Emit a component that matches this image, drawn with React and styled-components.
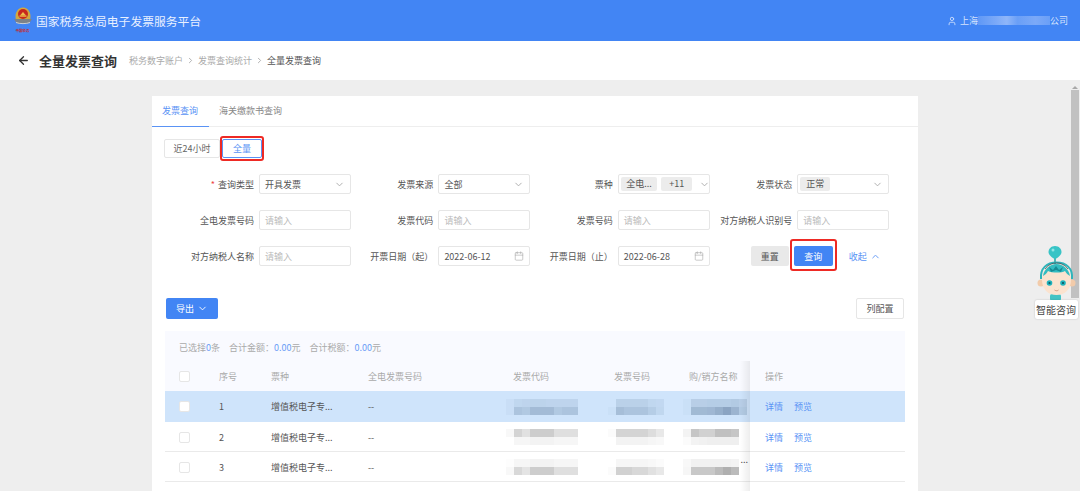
import React from "react";
import styled, { createGlobalStyle } from "styled-components";
import { ArrowLeft, Calendar, ChevronDown, ChevronRight, ChevronUp, User } from "lucide-react";

const Global = createGlobalStyle`
  html, body {
    margin: 0;
    height: 491px;
    overflow: hidden;
    background: #eeeeee;
    font-family: "Noto Sans CJK SC", "Noto Sans", sans-serif;
    font-size: 9px;
    color: #555;
  }
  * { box-sizing: border-box; }
`;

const Page = styled.div`
  position: relative;
  width: 1080px;
  height: 491px;
  overflow: hidden;
`;

// top bar
const TopBar = styled.header`
  height: 41px;
  background: #4285f4;
  display: flex;
  align-items: center;
  justify-content: space-between;
  padding: 0 12px 0 13px;
  color: #fff;
`;

const Brand = styled.div`
  display: flex;
  align-items: center;
  gap: 2px;
  font-size: 11.8px;
  color: #e8f0ff;
`;

const Account = styled.div`
  display: flex;
  align-items: center;
  font-size: 9px;
  color: #d5e3fd;
  svg { margin-right: 3px; }
`;

const AccountBlur = styled.span`
  width: 72px;
  height: 9px;
  background: linear-gradient(90deg, #5f98f6 0%, #7ba9f8 25%, #8fb6f9 40%, #6a9ff7 55%, #7ba9f8 80%, #6a9ff7 100%);
`;

const SubBar = styled.div`
  height: 39px;
  background: #fff;
  display: flex;
  align-items: center;
  padding-left: 17px;
  color: #333;
`;

const Title = styled.h1`
  margin: 0 12px 0 9px;
  font-size: 13px;
  font-weight: 700;
  color: #333;
`;

const Crumbs = styled.nav`
  display: flex;
  align-items: center;
  gap: 3px;
  color: #aaa;
  svg { color: #999; }
`;

const CrumbNow = styled.span`
  color: #555;
`;

// main card
const Card = styled.main`
  width: 766px;
  margin: 16px 0 0 152px;
  background: #fff;
  height: 420px;
`;

const Tabs = styled.div`
  display: flex;
  height: 31px;
  border-bottom: 1px solid #eee;
`;

const Tab = styled.div`
  padding: 0 ${({ $active }) => ($active ? "11px 0 10px" : "10px")};
  line-height: 30px;
  height: 31px;
  color: ${({ $active }) => ($active ? "#5a93f5" : "#888")};
  border-bottom: 1px solid ${({ $active }) => ($active ? "#5a93f5" : "transparent")};
`;

const Body = styled.div`
  padding: 12px 13px 0 12px;
`;

const Segments = styled.div`
  display: flex;
  height: 19px;
  gap: 2px;
`;

const Segment = styled.div`
  position: relative;
  width: ${({ $w }) => $w}px;
  display: flex;
  align-items: center;
  justify-content: center;
  border: 1px solid ${({ $active }) => ($active ? "#5a93f5" : "#e6e6e6")};
  border-radius: 2px;
  color: ${({ $active }) => ($active ? "#5a93f5" : "#666")};
`;

const Highlight = styled.span`
  position: absolute;
  top: ${({ $t }) => $t}px;
  bottom: ${({ $b }) => $b}px;
  left: ${({ $x }) => $x}px;
  right: ${({ $x }) => $x}px;
  border: 2px solid #ee2a24;
  border-radius: 3px;
  pointer-events: none;
`;

const FormGrid = styled.div`
  display: grid;
  grid-template-columns: repeat(4, 179.4px);
  grid-auto-rows: 20px;
  row-gap: 16px;
  margin: 16px 0 0 7.6px;
`;

const Field = styled.div`
  display: grid;
  grid-template-columns: 1fr 92px;
  column-gap: 5px;
  align-items: center;
`;

const Label = styled.label`
  text-align: right;
  white-space: nowrap;
  color: #555;
`;

const Req = styled.span`
  color: #ee4444;
  margin-right: 3px;
`;

const Input = styled.div`
  height: 20px;
  border: 1px solid #e6e6e6;
  border-radius: 2px;
  display: flex;
  align-items: center;
  padding: 0 5px;
  gap: 2px;
  color: ${({ $ph }) => ($ph ? "#bbb" : "#555")};
  svg { margin-left: auto; color: #aaa; flex: none; }
`;

const Chip = styled.span`
  background: #ececec;
  border-radius: 2px;
  height: 14px;
  line-height: 14px;
  padding: 0 ${({ $pad }) => $pad}px;
  margin-left: -3px;
  margin-right: 5px;
  white-space: nowrap;
`;

const Actions = styled.div`
  display: flex;
  align-items: center;
  padding-left: 41px;
  gap: 5px;
  white-space: nowrap;
`;

const Button = styled.button`
  position: relative;
  font: inherit;
  flex: none;
  height: ${({ $h }) => $h || 20}px;
  width: ${({ $w }) => $w}px;
  border-radius: 2px;
  padding: 0;
  display: flex;
  align-items: center;
  justify-content: center;
  gap: 3px;
  border: ${({ $kind }) => ($kind === "outline" ? "1px solid #e6e6e6" : "none")};
  background: ${({ $kind }) => ({ primary: "#4285f4", muted: "#e9e9e9", outline: "#fff" }[$kind])};
  color: ${({ $kind }) => ($kind === "primary" ? "#fff" : "#555")};
`;

const Collapse = styled.span`
  display: flex;
  align-items: center;
  gap: 3px;
  color: #5a93f5;
  margin-left: 11px;
`;

const Toolbar = styled.div`
  display: flex;
  justify-content: space-between;
  align-items: center;
  height: 22px;
  margin: 31px 1px 0 2px;
`;

// table
const Table = styled.div`
  position: relative;
  width: 740px;
  margin: 12px 0 0 1px;
  background: #fff;
`;

const Summary = styled.div`
  height: 31px;
  padding-top: 1px;
  display: flex;
  align-items: center;
  gap: 9px;
  padding-left: 14px;
  background: #f9faff;
  color: #aaa;
`;

const Num = styled.span`
  color: #6b9ef6;
`;

const columns = "54px 52px 97px 145px 101px 75px 76px 1fr";

const HeadRow = styled.div`
  display: grid;
  grid-template-columns: ${columns};
  height: 29px;
  align-items: center;
  background: #f9faff;
  color: #aaa;
`;

const Row = styled.div`
  display: grid;
  grid-template-columns: ${columns};
  height: ${({ $selected }) => ($selected ? 31 : 30)}px;
  padding-top: 1px;
  align-items: center;
  background: ${({ $selected }) => ($selected ? "#cfe4fb" : "#fff")};
  border-bottom: 1px solid ${({ $selected }) => ($selected ? "#cfe4fb" : "#eaeaea")};
  color: #555;
`;

const Check = styled.span`
  display: block;
  width: 11px;
  height: 11px;
  margin-left: 14px;
  background: #fff;
  border: 1px solid #e6e6e6;
  border-radius: 2px;
`;

const Link = styled.span`
  color: #5a93f5;
  margin-right: 11px;
`;

const Smudge = styled.div`
  display: grid;
  grid-template-columns: repeat(${({ $n }) => $n}, 8px);
  grid-auto-rows: 8px;
  width: max-content;
  margin-left: ${({ $shift }) => $shift}px;
  filter: blur(0.6px);
`;

const Tile = styled.i`
  display: block;
  background: ${({ $tint }) => ($tint ? "#5d7a9c" : "#8d8d8d")};
`;

const Dots = styled.span`
  position: absolute;
  right: 157px;
  top: 122px;
  color: #555;
`;

const FixedShade = styled.div`
  position: absolute;
  left: 575px;
  top: 30px;
  bottom: -200px;
  width: 10px;
  background: linear-gradient(90deg, rgba(0, 0, 0, 0), rgba(0, 0, 0, 0.07));
  pointer-events: none;
`;

// overlays
const ScrollArrow = styled.span`
  position: absolute;
  left: 1072px;
  top: 83px;
  width: 0;
  height: 0;
  border: 3px solid transparent;
  border-bottom: 3px solid #a8a8a8;
`;

const ScrollThumb = styled.div`
  position: absolute;
  left: 1071px;
  top: 90px;
  width: 8px;
  height: 208px;
  background: #c1c1c1;
`;

const Helper = styled.div`
  position: absolute;
  left: 1034px;
  top: 246px;
  width: 44px;
  display: flex;
  flex-direction: column;
  align-items: center;
`;

const HelperLabel = styled.div`
  width: 43px;
  height: 19px;
  margin-top: -1px;
  line-height: 19px;
  text-align: center;
  font-size: 10px;
  color: #444;
  background: #fff;
  border-radius: 2px;
  box-shadow: 0 0 2px rgba(0, 0, 0, 0.2);
  white-space: nowrap;
`;

const Emblem = () => (
  <svg width="21" height="28" viewBox="0 0 21 28">
    <path d="M3 13C1 6 5 .5 10 .5S19 6 17 13z" fill="#d2a83e" />
    <circle cx="10" cy="7" r="5" fill="#c8281e" />
    <path d="M7 8.500l3-3.500 3 3.500z" fill="#eec04c" />
    <rect x="6.500" y="8.500" width="7" height="1.200" fill="#eec04c" />
    <path d="M1 12h18l-2.500 4c-3 1.200-10 1.200-13 0z" fill="#7d8288" />
    <path d="M3 15.500c4 1.500 10 1.500 14 0" fill="none" stroke="#dfe3e8" strokeWidth="0.8" />
    <text x="9.500" y="24.500" fontSize="3.400" textAnchor="middle" fill="#c8281e" fontWeight="700">中国税务</text>
  </svg>
);

const Mascot = () => (
  <svg width="44" height="55" viewBox="0 0 44 55">
    <path d="M21 10v9" stroke="#2aa9a9" strokeWidth="1.600" />
    <path d="M21 0c4 0 6.500 3 6.500 6S24 12 21 13c-3-1-6.500-4-6.500-7S17 0 21 0z" fill="#38c4c6" />
    <circle cx="19" cy="4" r="1.500" fill="#8fe6e6" />
    <rect x="16" y="48" width="11" height="7" rx="2" fill="#44c3c4" />
    <circle cx="7" cy="37" r="3.500" fill="#f2cbaa" />
    <circle cx="38" cy="37" r="3.500" fill="#f2cbaa" />
    <path d="M8 33c0-9 6-15 14.500-15S37 24 37 33v1c0 9-6 15-14.500 15S8 43 8 34z" fill="#fbe3cf" />
    <path d="M9 30c1-7 7-12 13.500-12S35 23 36 30c-2-1-4-3-5-5-3 2-13 2-17 0-1 2-3 4-5 5z" fill="#33bcc1" />
    <path d="M15 21l4 3 3-4 3 4 4-3-2 5-5-2-5 2z" fill="#178b94" />
    <path d="M7 33C6 22 13 16.500 22.500 16.500S39 22 38 33" fill="none" stroke="#2fb4ba" strokeWidth="2" />
    <path d="M11 23c3-4 7-6 11.500-6S31 19 34 23" fill="none" stroke="#4a4f54" strokeWidth="0.800" />
    <circle cx="15.500" cy="37" r="2.800" fill="#1fb3bd" />
    <circle cx="29" cy="37" r="2.800" fill="#1fb3bd" />
    <circle cx="15.500" cy="37" r="1.100" fill="#0b5660" />
    <circle cx="29" cy="37" r="1.100" fill="#0b5660" />
    <path d="M20.500 44c1.500 1 3 1 4 0" fill="none" stroke="#c98a70" strokeWidth="0.800" />
  </svg>
);

// blurred-out cell, two lines of mosaic tiles
const Blur = ({ lines, shift, tint }) => (
  <Smudge $n={lines[0].length} $shift={shift}>
    {lines.flat().map((a, i) => (
      <Tile key={i} $tint={tint} style={{ opacity: a }} />
    ))}
  </Smudge>
);

const rows = [
  {
    no: 1,
    selected: true,
    code: [[0.05, 0.12, 0.14, 0.16, 0.16, 0.14, 0.14, 0.14, 0.14], [0.05, 0.3, 0.26, 0.38, 0.38, 0.38, 0.26, 0.3, 0.3]],
    num: [[0, 0.18, 0.18, 0.18, 0.18, 0.12, 0.1], [0.04, 0.36, 0.3, 0.3, 0.3, 0.22, 0.12]],
    name: [[0.04, 0.2, 0.2, 0.22, 0.22, 0.22, 0.25, 0.2], [0.04, 0.4, 0.4, 0.42, 0.5, 0.6, 0.45, 0.25]],
  },
  {
    no: 2,
    code: [[0.06, 0.38, 0.26, 0.44, 0.44, 0.44, 0.28, 0.28, 0.28], [0, 0.08, 0.08, 0.1, 0.1, 0.1, 0.08, 0.08, 0.08]],
    num: [[0.04, 0.38, 0.38, 0.38, 0.38, 0.3, 0.2], [0, 0.1, 0.1, 0.1, 0.1, 0.08, 0.06]],
    name: [[0.1, 0.5, 0.4, 0.4, 0.55, 0.55, 0.5, 0], [0.04, 0.1, 0.12, 0.14, 0.14, 0.14, 0.14, 0]],
  },
  {
    no: 3,
    code: [[0.02, 0.08, 0.08, 0.1, 0.1, 0.1, 0.08, 0.08, 0.08], [0.06, 0.34, 0.24, 0.44, 0.44, 0.44, 0.28, 0.28, 0.28]],
    num: [[0, 0.08, 0.08, 0.08, 0.08, 0.06, 0.04], [0.04, 0.4, 0.4, 0.34, 0.34, 0.26, 0.2]],
    name: [[0.06, 0.12, 0.12, 0.12, 0.12, 0.12, 0.1, 0], [0.08, 0.48, 0.48, 0.48, 0.6, 0.7, 0.6, 0]],
  },
];

const App = () => (
  <Page>
    <Global />
    <TopBar>
      <Brand>
        <Emblem />
        国家税务总局电子发票服务平台
      </Brand>
      <Account>
        <User size={10} strokeWidth={2} />
        上海
        <AccountBlur />
        公司
      </Account>
    </TopBar>
    <SubBar>
      <ArrowLeft size={13} strokeWidth={2.4} />
      <Title>全量发票查询</Title>
      <Crumbs>
        税务数字账户
        <ChevronRight size={9} />
        发票查询统计
        <ChevronRight size={9} />
        <CrumbNow>全量发票查询</CrumbNow>
      </Crumbs>
    </SubBar>

    <Card>
      <Tabs>
        <Tab $active>发票查询</Tab>
        <Tab>海关缴款书查询</Tab>
      </Tabs>
      <Body>
        <Segments>
          <Segment $w={56}>近24小时</Segment>
          <Segment $w={40} $active>
            全量
            <Highlight $t={-4} $b={-4} $x={-3} />
          </Segment>
        </Segments>

        <FormGrid>
          <Field>
            <Label><Req>*</Req>查询类型</Label>
            <Input>开具发票<ChevronDown size={11} /></Input>
          </Field>
          <Field>
            <Label>发票来源</Label>
            <Input>全部<ChevronDown size={11} /></Input>
          </Field>
          <Field>
            <Label>票种</Label>
            <Input><Chip $pad={5.5}>全电...</Chip><Chip $pad={8}>+11</Chip><ChevronDown size={11} /></Input>
          </Field>
          <Field>
            <Label>发票状态</Label>
            <Input><Chip $pad={6}>正常</Chip><ChevronDown size={11} /></Input>
          </Field>

          <Field>
            <Label>全电发票号码</Label>
            <Input $ph>请输入</Input>
          </Field>
          <Field>
            <Label>发票代码</Label>
            <Input $ph>请输入</Input>
          </Field>
          <Field>
            <Label>发票号码</Label>
            <Input $ph>请输入</Input>
          </Field>
          <Field>
            <Label>对方纳税人识别号</Label>
            <Input $ph>请输入</Input>
          </Field>

          <Field>
            <Label>对方纳税人名称</Label>
            <Input $ph>请输入</Input>
          </Field>
          <Field>
            <Label>开票日期（起）</Label>
            <Input>2022-06-12<Calendar size={10} strokeWidth={1.5} /></Input>
          </Field>
          <Field>
            <Label>开票日期（止）</Label>
            <Input>2022-06-28<Calendar size={10} strokeWidth={1.5} /></Input>
          </Field>
          <Actions>
            <Button $kind="muted" $w={38}>重置</Button>
            <Button $kind="primary" $w={39}>
              查询
              <Highlight $t={-7} $b={-5} $x={-4} />
            </Button>
            <Collapse>收起<ChevronUp size={11} /></Collapse>
          </Actions>
        </FormGrid>

        <Toolbar>
          <Button $kind="primary" $w={52} $h={21}>导出<ChevronDown size={11} /></Button>
          <Button $kind="outline" $w={48} $h={21}>列配置</Button>
        </Toolbar>

        <Table>
          <Summary>
            <span>已选择<Num>0</Num>条</span>
            <span>合计金额：<Num>0.00</Num>元</span>
            <span>合计税额：<Num>0.00</Num>元</span>
          </Summary>
          <HeadRow>
            <Check />
            <span>序号</span>
            <span>票种</span>
            <span>全电发票号码</span>
            <span>发票代码</span>
            <span>发票号码</span>
            <span>购/销方名称</span>
            <span>操作</span>
          </HeadRow>
          {rows.map((r) => (
            <Row key={r.no} $selected={r.selected}>
              <Check />
              <span>{r.no}</span>
              <span>增值税电子专...</span>
              <span>--</span>
              <Blur lines={r.code} shift={-7} tint={r.selected} />
              <Blur lines={r.num} shift={-6} tint={r.selected} />
              <Blur lines={r.name} shift={-6} tint={r.selected} />
              <span>
                <Link>详情</Link>
                <Link>预览</Link>
              </span>
            </Row>
          ))}
          <Dots>...</Dots>
          <FixedShade />
        </Table>
      </Body>
    </Card>

    <ScrollArrow />
    <ScrollThumb />
    <Helper>
      <Mascot />
      <HelperLabel>智能咨询</HelperLabel>
    </Helper>
  </Page>
);

export default App;
